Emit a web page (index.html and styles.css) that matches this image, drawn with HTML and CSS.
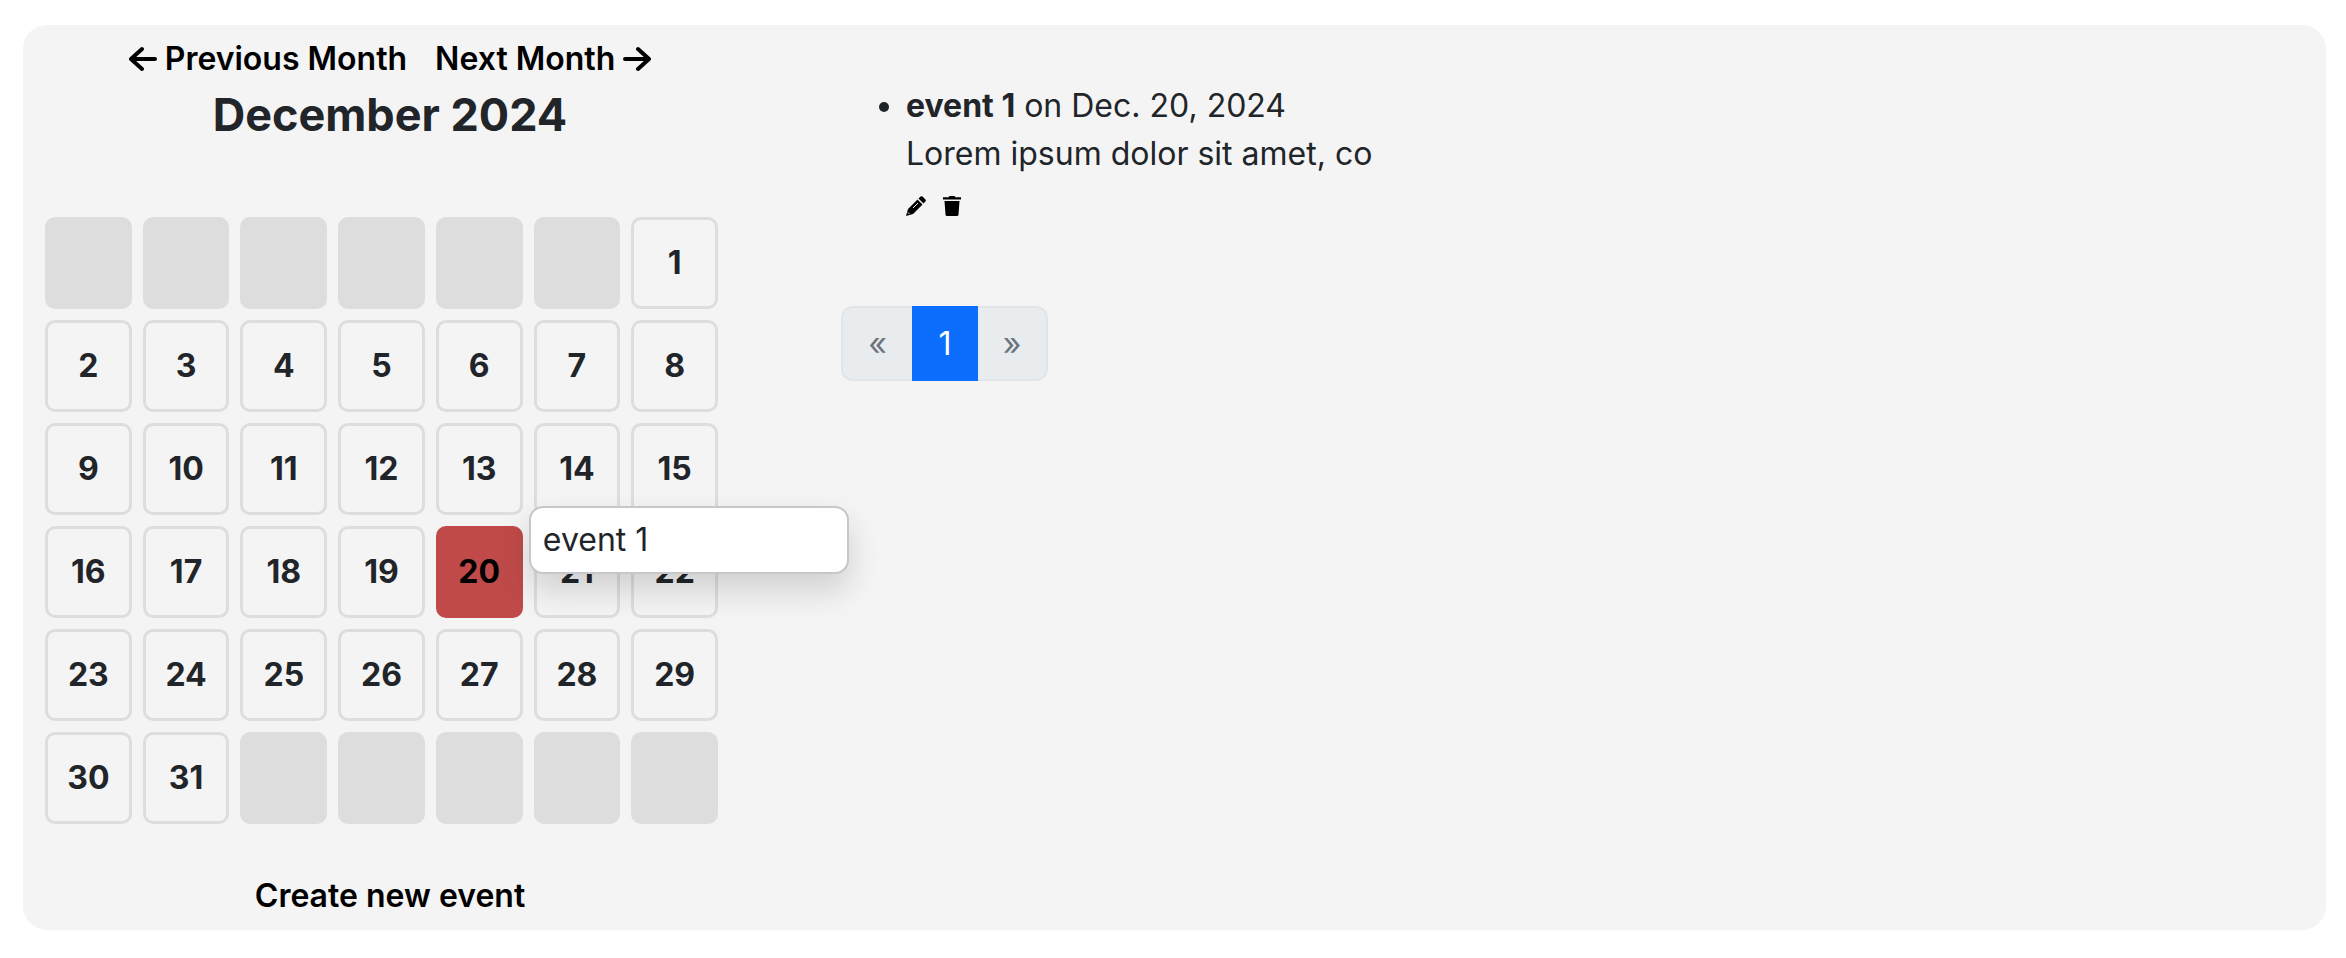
FILE: index.html
```html
<!DOCTYPE html>
<html lang="en">
<head>
<meta charset="utf-8">
<title>Event calendar</title>
<link rel="stylesheet" href="styles.css">
</head>
<body>
<main class="panel">
  <section class="calendar">
    <nav class="months">
      <a href="#"><svg class="arrow" viewBox="0 0 28 28" aria-hidden="true"><path d="M13 4L2 14L13 24M2 14H26"/></svg>Previous Month</a>
      <a href="#">Next Month<svg class="arrow" viewBox="0 0 28 28" aria-hidden="true"><path d="M15 4L26 14L15 24M26 14H2"/></svg></a>
    </nav>
    <h1 class="title">December 2024</h1>
    <div class="grid">
      <div class="day empty"></div><div class="day empty"></div><div class="day empty"></div><div class="day empty"></div><div class="day empty"></div><div class="day empty"></div><div class="day">1</div>
      <div class="day">2</div><div class="day">3</div><div class="day">4</div><div class="day">5</div><div class="day">6</div><div class="day">7</div><div class="day">8</div>
      <div class="day">9</div><div class="day">10</div><div class="day">11</div><div class="day">12</div><div class="day">13</div><div class="day">14</div><div class="day">15</div>
      <div class="day">16</div><div class="day">17</div><div class="day">18</div><div class="day">19</div><div class="day busy">20<div class="popup">event 1</div></div><div class="day">21</div><div class="day">22</div>
      <div class="day">23</div><div class="day">24</div><div class="day">25</div><div class="day">26</div><div class="day">27</div><div class="day">28</div><div class="day">29</div>
      <div class="day">30</div><div class="day">31</div><div class="day empty"></div><div class="day empty"></div><div class="day empty"></div><div class="day empty"></div><div class="day empty"></div>
    </div>
    <a class="create" href="#">Create new event</a>
  </section>
  <section class="events">
    <ul class="list">
      <li><strong>event 1</strong> on Dec. 20, 2024<br>Lorem ipsum dolor sit amet, co
        <div class="actions">
          <a href="#" aria-label="Edit"><svg class="icon" viewBox="0 0 20 20"><path d="M0 20L2 13L11.500 3.500L16.500 8.500L7 18ZM12.500 2.500L14.500 .6Q15.500 -.3 16.500 .6L19.400 3.500Q20.300 4.500 19.400 5.500L17.500 7.500Z"/><path class="cut" d="M7 12L12 7M2 16.500L3.500 18"/></svg></a>
          <a href="#" aria-label="Delete"><svg class="icon" viewBox="0 0 20 20"><path d="M1 1.200H6.500L7.500 0H12.500L13.500 1.200H19V3.500H1Z"/><path d="M2.500 5H17.500L16.500 18.500Q16.400 20 15 20H5Q3.600 20 3.500 18.500Z"/></svg></a>
        </div>
      </li>
    </ul>
    <nav class="pages" aria-label="Pages">
      <button class="page" disabled aria-label="Previous page">«</button>
      <button class="page current" aria-current="page">1</button>
      <button class="page" disabled aria-label="Next page">»</button>
    </nav>
  </section>
</main>
</body>
</html>
```
FILE: styles.css
```css
* { box-sizing: border-box; }
body {
  margin: 0;
  padding: 25px 20px 28px 23px;
  background: #fff;
  color: #212529;
  font: 400 32px/48px Inter, "Liberation Sans", sans-serif;
}
a { color: #000; text-decoration: none; }
.panel {
  display: flex;
  gap: 106px;
  padding: 10px 22px;
  background: #f4f4f4;
  border-radius: 24px;
}
.calendar { flex: 0 0 690px; text-align: center; }
.months {
  display: flex;
  justify-content: center;
  gap: 28px;
  font-weight: 600;
}
.months a { display: flex; align-items: center; gap: 8px; }
.arrow { width: 28px; height: 28px; fill: none; stroke: #000; stroke-width: 4; stroke-linecap: round; stroke-linejoin: round; }
.title { margin: 4px 0 74px; font-size: 45px; line-height: 56px; font-weight: 700; }
.grid { display: grid; grid-template-columns: repeat(7, 1fr); grid-auto-rows: 92px; gap: 11px; margin-right: 17px; }
.day {
  position: relative;
  display: flex;
  align-items: center;
  justify-content: center;
  border: 3px solid #ddd;
  border-radius: 10px;
  font-weight: 700;
}
.empty { background: #ddd; }
.busy { background: #c04a4a; border-color: #c04a4a; color: #000; }
.popup {
  position: absolute;
  z-index: 1;
  left: 90px;
  top: -23px;
  width: 320px;
  padding: 8px 12px;
  background: #fff;
  border: 2px solid #c5c7ca;
  border-radius: 14px;
  box-shadow: 0 16px 32px rgba(0, 0, 0, .15);
  color: #212529;
  font-weight: 400;
  text-align: left;
}
.create { display: block; margin-top: 48px; font-weight: 600; }
.events { flex: 1; padding-top: 47px; }
.list { margin: 0; padding-left: 65px; }
.actions { display: flex; gap: 16px; padding-top: 2px; height: 54px; align-items: center; }
.actions a { display: flex; }
.icon { width: 20px; height: 20px; fill: #000; }
.cut { fill: none; stroke: #f4f4f4; stroke-width: 1; }
.pages { display: flex; margin-top: 74px; }
.page {
  width: 66px;
  height: 75px;
  padding: 0;
  background: #e9ecef;
  border: 2px solid #e2e5e8;
  color: #6c757d;
  font: inherit;
}
.page:first-child { width: 71px; border-right: 0; border-radius: 12px 0 0 12px; }
.page:last-child { width: 70px; border-left: 0; border-radius: 0 12px 12px 0; }
.current { background: #0d6efd; border-color: #0d6efd; color: #fff; }
```
